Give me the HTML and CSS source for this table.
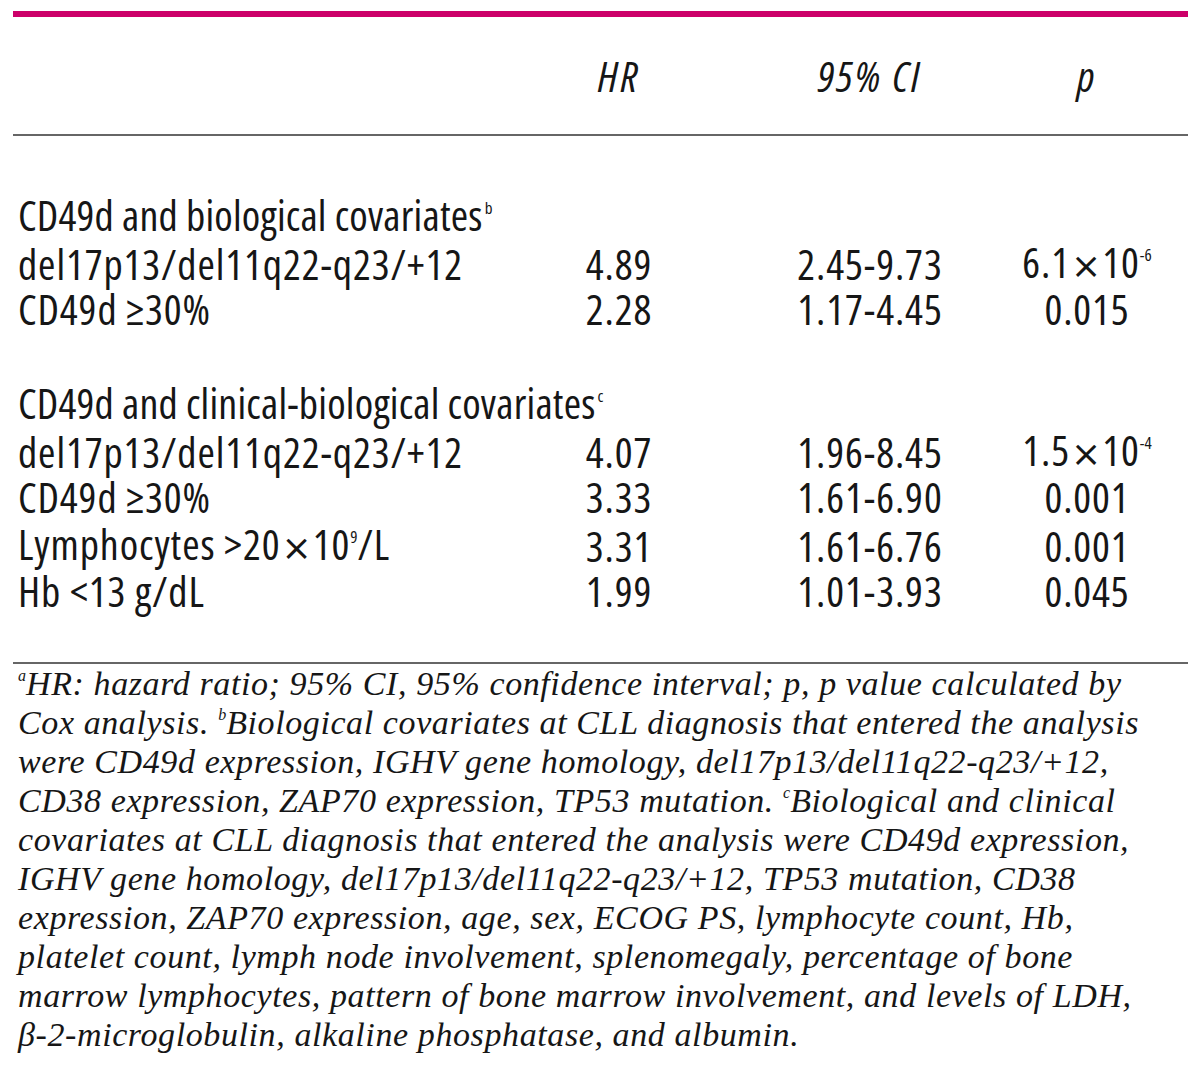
FILE: index.html
```html
<!DOCTYPE html>
<html lang="en">
<head>
<meta charset="utf-8">
<title>CD49d multivariate analysis</title>
<link rel="stylesheet" href="styles.css">
</head>
<body>
<div class="page">
  <div class="tbl">
    <div class="row head">
      <div class="cell label"></div>
      <div class="cell num">HR</div>
      <div class="cell num">95% CI</div>
      <div class="cell num">p</div>
    </div>
    <div class="tbody">
      <div class="group">
        <div class="row"><div class="cell title">CD49d and biological covariates<sup class="ref">b</sup></div></div>
        <div class="row">
          <div class="cell label">del17p13/del11q22-q23/+12</div>
          <div class="cell num">4.89</div>
          <div class="cell num">2.45-9.73</div>
          <div class="cell num">6.1<span class="times">×</span>10<sup class="exp">-6</sup></div>
        </div>
        <div class="row">
          <div class="cell label">CD49d ≥30%</div>
          <div class="cell num">2.28</div>
          <div class="cell num">1.17-4.45</div>
          <div class="cell num">0.015</div>
        </div>
      </div>
      <div class="group">
        <div class="row"><div class="cell title">CD49d and clinical-biological covariates<sup class="ref">c</sup></div></div>
        <div class="row">
          <div class="cell label">del17p13/del11q22-q23/+12</div>
          <div class="cell num">4.07</div>
          <div class="cell num">1.96-8.45</div>
          <div class="cell num">1.5<span class="times">×</span>10<sup class="exp">-4</sup></div>
        </div>
        <div class="row">
          <div class="cell label">CD49d ≥30%</div>
          <div class="cell num">3.33</div>
          <div class="cell num">1.61-6.90</div>
          <div class="cell num">0.001</div>
        </div>
        <div class="row">
          <div class="cell label">Lymphocytes &gt;20<span class="times">×</span>10<sup class="exp">9</sup>/L</div>
          <div class="cell num">3.31</div>
          <div class="cell num">1.61-6.76</div>
          <div class="cell num">0.001</div>
        </div>
        <div class="row">
          <div class="cell label">Hb &lt;13 g/dL</div>
          <div class="cell num">1.99</div>
          <div class="cell num">1.01-3.93</div>
          <div class="cell num">0.045</div>
        </div>
      </div>
    </div>
  </div>
  <p class="notes"><sup class="fn">a</sup>HR: hazard ratio; 95% CI, 95% confidence interval; p, p value calculated by<br>Cox analysis. <sup class="fn">b</sup>Biological covariates at CLL diagnosis that entered the analysis<br>were CD49d expression, IGHV gene homology, del17p13/del11q22-q23/+12,<br>CD38 expression, ZAP70 expression, TP53 mutation. <sup class="fn">c</sup>Biological and clinical<br>covariates at CLL diagnosis that entered the analysis were CD49d expression,<br>IGHV gene homology, del17p13/del11q22-q23/+12, TP53 mutation, CD38<br>expression, ZAP70 expression, age, sex, ECOG PS, lymphocyte count, Hb,<br>platelet count, lymph node involvement, splenomegaly, percentage of bone<br>marrow lymphocytes, pattern of bone marrow involvement, and levels of LDH,<br>β-2-microglobulin, alkaline phosphatase, and albumin.</p>
</div>
</body>
</html>
```

FILE: styles.css
```css
html, body {
  margin: 0;
  padding: 0;
  background: #ffffff;
}

.page {
  padding: 11px 0 0 13px;
  color: #161616;
}

.tbl {
  border-top: 6px solid #cc0069;
}

.row {
  display: grid;
  grid-template-columns: 486px 240px 262px 172px;
  height: 47px;
  align-items: center;
  font-family: "Open Sans", "DejaVu Sans Condensed", sans-serif;
  font-stretch: 75%;
  font-size: 42px;
  line-height: 47px;
  letter-spacing: 0.9px;
  white-space: nowrap;
}

.head {
  height: 117px;
  border-bottom: 2px solid #666666;
  font-style: italic;
  letter-spacing: 2.5px;
}

.tbody {
  padding: 55px 0 48px;
  border-bottom: 2px solid #666666;
}

.group + .group {
  margin-top: 47px;
}

.cell.label,
.cell.title {
  padding-left: 5px;
}

.cell.title {
  grid-column: 1 / -1;
  letter-spacing: 0.2px;
}

.cell.num {
  text-align: center;
}

.times {
  font-family: "DejaVu Sans", sans-serif;
  font-stretch: 100%;
  font-size: 36px;
  letter-spacing: 0;
  margin: 0 1px;
}

.ref {
  font-size: 17px;
  line-height: 0;
  vertical-align: 17px;
  margin-left: 2px;
  letter-spacing: 0;
}

.exp {
  font-size: 17px;
  line-height: 0;
  vertical-align: 17px;
  letter-spacing: 0;
}

.notes {
  margin: 0;
  padding-left: 5px;
  font-family: "Liberation Serif", "DejaVu Serif", serif;
  font-style: italic;
  font-size: 34px;
  line-height: 39px;
  letter-spacing: 0.6px;
  white-space: nowrap;
}

.fn {
  font-size: 16px;
  line-height: 0;
  vertical-align: 14px;
  letter-spacing: 0;
}
```
